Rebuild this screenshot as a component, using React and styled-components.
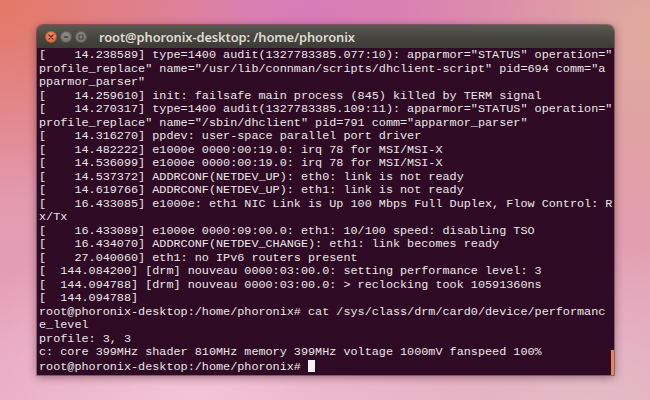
import styled, { createGlobalStyle } from 'styled-components'

const GlobalStyle = createGlobalStyle`
  html, body {
    margin: 0;
    padding: 0;
  }
  body {
    width: 650px;
    height: 400px;
    overflow: hidden;
  }
`

const Desktop = styled.div`
  width: 650px;
  height: 400px;
  box-sizing: border-box;
  padding: 25px 36px 25px 37px;
  display: flex;
  background:
    radial-gradient(ellipse 260px 200px at 0% 0%, rgba(228, 118, 98, 0.95), rgba(228, 118, 98, 0) 100%),
    radial-gradient(ellipse 300px 180px at 48% 5%, rgba(214, 120, 185, 0.9), rgba(214, 120, 185, 0) 100%),
    radial-gradient(ellipse 260px 240px at 100% 10%, rgba(224, 172, 158, 0.9), rgba(224, 172, 158, 0) 100%),
    radial-gradient(ellipse 300px 160px at 30% 100%, rgba(244, 198, 216, 0.95), rgba(244, 198, 216, 0) 100%),
    radial-gradient(ellipse 300px 160px at 90% 100%, rgba(228, 188, 200, 0.95), rgba(228, 188, 200, 0) 100%),
    linear-gradient(180deg, #df8fa6 0%, #e6a6bd 100%);
`

const Window = styled.div`
  flex: 1;
  display: flex;
  flex-direction: column;
  border-radius: 6px 6px 0 0;
  overflow: hidden;
  box-shadow: 0 2px 10px rgba(40, 0, 20, 0.45), 0 0 0 1px rgba(30, 20, 20, 0.35);
`

const TitleBar = styled.div`
  height: 23px;
  flex: none;
  display: flex;
  align-items: center;
  padding-left: 8px;
  background: linear-gradient(180deg, #5a5954 0%, #47463f 50%, #3c3b37 100%);
`

const Buttons = styled.div`
  display: flex;
  align-items: center;
  gap: 3px;
  margin-right: 12px;
`

const WinButton = styled.div`
  width: 12px;
  height: 12px;
  border-radius: 50%;
  display: flex;
  align-items: center;
  justify-content: center;
  background: ${p => (p.$close
    ? 'radial-gradient(circle at 50% 35%, #f7936a, #df5a2a)'
    : 'radial-gradient(circle at 50% 35%, #8e8d88, #6c6b66)')};
  box-shadow: inset 0 0 0 1px rgba(0, 0, 0, 0.25);
`

const Title = styled.div`
  font-family: "Noto Sans", "Open Sans", sans-serif;
  font-weight: 600;
  font-size: 12.9px;
  color: #dfdbd2;
  letter-spacing: -0.1px;
`

const Terminal = styled.div`
  flex: 1;
  position: relative;
  background: #2e0a24;
  padding: 1px 0 0 2px;
`

const Screen = styled.pre`
  margin: 0;
  font-family: "Liberation Mono", "DejaVu Sans Mono", monospace;
  font-size: 11.8px;
  line-height: 13.5px;
  color: #ebe7e9;
  white-space: pre;
`

const Cursor = styled.span`
  display: inline-block;
  width: 7px;
  height: 12px;
  background: #f4f2f2;
  vertical-align: -2px;
`

const ScrollThumb = styled.div`
  position: absolute;
  right: 0;
  bottom: 0;
  width: 3px;
  height: 25px;
  background: #e8845a;
`

const lines = [
  '[    14.238589] type=1400 audit(1327783385.077:10): apparmor="STATUS" operation="',
  'profile_replace" name="/usr/lib/connman/scripts/dhclient-script" pid=694 comm="a',
  'pparmor_parser"',
  '[    14.259610] init: failsafe main process (845) killed by TERM signal',
  '[    14.270317] type=1400 audit(1327783385.109:11): apparmor="STATUS" operation="',
  'profile_replace" name="/sbin/dhclient" pid=791 comm="apparmor_parser"',
  '[    14.316270] ppdev: user-space parallel port driver',
  '[    14.482222] e1000e 0000:00:19.0: irq 78 for MSI/MSI-X',
  '[    14.536099] e1000e 0000:00:19.0: irq 78 for MSI/MSI-X',
  '[    14.537372] ADDRCONF(NETDEV_UP): eth0: link is not ready',
  '[    14.619766] ADDRCONF(NETDEV_UP): eth1: link is not ready',
  '[    16.433085] e1000e: eth1 NIC Link is Up 100 Mbps Full Duplex, Flow Control: R',
  'x/Tx',
  '[    16.433089] e1000e 0000:09:00.0: eth1: 10/100 speed: disabling TSO',
  '[    16.434070] ADDRCONF(NETDEV_CHANGE): eth1: link becomes ready',
  '[    27.040060] eth1: no IPv6 routers present',
  '[  144.084200] [drm] nouveau 0000:03:00.0: setting performance level: 3',
  '[  144.094788] [drm] nouveau 0000:03:00.0: > reclocking took 10591360ns',
  '[  144.094788]',
  'root@phoronix-desktop:/home/phoronix# cat /sys/class/drm/card0/device/performanc',
  'e_level',
  'profile: 3, 3',
  'c: core 399MHz shader 810MHz memory 399MHz voltage 1000mV fanspeed 100%',
]

const CloseIcon = () => (
  <svg width="6" height="6" viewBox="0 0 6 6">
    <path d="M1 1L5 5M5 1L1 5" stroke="#5a2410" strokeWidth="1.3" strokeLinecap="round" />
  </svg>
)

const MinIcon = () => (
  <svg width="6" height="6" viewBox="0 0 6 6">
    <path d="M1 3H5" stroke="#3e3d39" strokeWidth="1.3" />
  </svg>
)

const MaxIcon = () => (
  <svg width="6" height="6" viewBox="0 0 6 6">
    <rect x="1" y="1" width="4" height="4" fill="none" stroke="#3e3d39" strokeWidth="1" />
  </svg>
)

export default function App() {
  return (
    <>
      <GlobalStyle />
      <Desktop>
        <Window>
          <TitleBar>
            <Buttons>
              <WinButton $close><CloseIcon /></WinButton>
              <WinButton><MinIcon /></WinButton>
              <WinButton><MaxIcon /></WinButton>
            </Buttons>
            <Title>root@phoronix-desktop: /home/phoronix</Title>
          </TitleBar>
          <Terminal>
            <Screen>
              {lines.join('\n')}
              {'\nroot@phoronix-desktop:/home/phoronix# '}
              <Cursor />
            </Screen>
            <ScrollThumb />
          </Terminal>
        </Window>
      </Desktop>
    </>
  )
}
